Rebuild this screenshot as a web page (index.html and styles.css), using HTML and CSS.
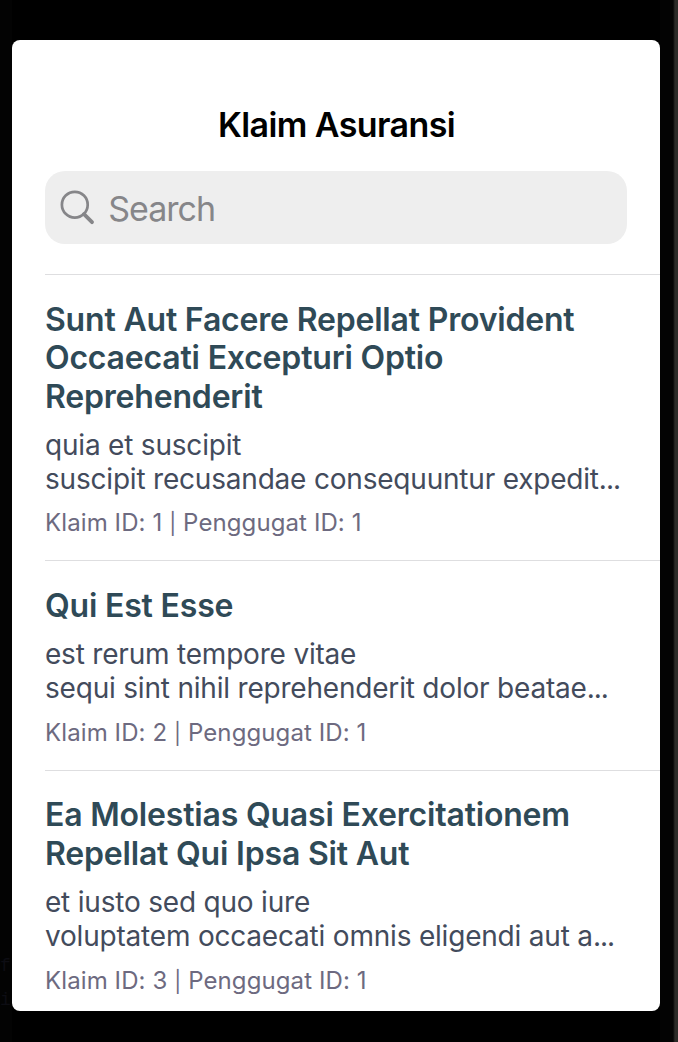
FILE: index.html
```html
<!DOCTYPE html>
<html lang="id">
<head>
<meta charset="utf-8">
<title>Klaim Asuransi</title>
<link rel="stylesheet" href="styles.css">
</head>
<body>
<div class="backdrop">
  <span class="ghost">f<br>i</span>
  <main class="screen">
    <h1 class="title">Klaim Asuransi</h1>
    <div class="search">
      <svg class="search-icon" width="36" height="36" viewBox="0 0 36 36" fill="none" stroke="#868689">
        <circle cx="15.8" cy="14.7" r="12.9" stroke-width="2.7"/>
        <path d="M25 24.2 33 32.2" stroke-width="3.8" stroke-linecap="round"/>
      </svg>
      <span class="placeholder">Search</span>
    </div>
    <section class="list">
      <article class="claim">
        <h2 class="claim-title">Sunt Aut Facere Repellat Provident<br>Occaecati Excepturi Optio<br>Reprehenderit</h2>
        <p class="claim-body">quia et suscipit<br>suscipit recusandae consequuntur expedit<span class="dots">...</span></p>
        <p class="claim-meta">Klaim ID: 1 <span class="bar">|</span> Penggugat ID: 1</p>
      </article>
      <article class="claim">
        <h2 class="claim-title">Qui Est Esse</h2>
        <p class="claim-body">est rerum tempore vitae<br>sequi sint nihil reprehenderit dolor beatae<span class="dots">...</span></p>
        <p class="claim-meta">Klaim ID: 2 <span class="bar">|</span> Penggugat ID: 1</p>
      </article>
      <article class="claim">
        <h2 class="claim-title">Ea Molestias Quasi Exercitationem<br>Repellat Qui Ipsa Sit Aut</h2>
        <p class="claim-body">et iusto sed quo iure<br>voluptatem occaecati omnis eligendi aut a<span class="dots">...</span></p>
        <p class="claim-meta">Klaim ID: 3 <span class="bar">|</span> Penggugat ID: 1</p>
      </article>
    </section>
  </main>
</div>
</body>
</html>
```
FILE: styles.css
```css
* { box-sizing: border-box; margin: 0; padding: 0; }
body { font-family: Inter, "Liberation Sans", sans-serif; background: #000; }
.backdrop {
  position: relative;
  width: 678px;
  height: 1042px;
  padding: 40px 0 0 12px;
  background: linear-gradient(90deg, #030303 12px, #000 12px, #000 660px, #030303 660px, #030303 673px, #2c2b28 675px);
  overflow: hidden;
}
.ghost {
  position: absolute;
  left: 0;
  top: 949px;
  font: 18px/34px "Liberation Mono", monospace;
  color: #0d0d13;
}
.screen {
  position: relative;
  width: 648px;
  height: 971px;
  padding-left: 33px;
  background: #fff;
  border-radius: 8px;
  overflow: hidden;
}
.title {
  width: 583px;
  padding-top: 65px;
  font-size: 34px;
  line-height: 40px;
  font-weight: 600;
  letter-spacing: -0.6px;
  text-align: center;
  color: #000;
  white-space: nowrap;
}
.search {
  display: flex;
  align-items: center;
  width: 582.4px;
  height: 73px;
  margin-top: 26px;
  padding-left: 14px;
  border-radius: 20px;
  background: #eee;
}
.search-icon { flex: none; }
.placeholder {
  margin-left: 13.3px;
  padding-top: 2px;
  font-size: 34px;
  line-height: 40px;
  letter-spacing: -1px;
  color: #868689;
}
.list { margin-top: 30px; }
.claim {
  border-top: 1px solid #dedee0;
  padding: 25.7px 0 21.8px;
  white-space: nowrap;
}
.claim-title {
  font-size: 32px;
  line-height: 38.4px;
  font-weight: 600;
  letter-spacing: -0.19px;
  color: #2f4a57;
}
.claim-body {
  margin-top: 12px;
  font-size: 28px;
  line-height: 34px;
  letter-spacing: -0.2px;
  color: #434b5c;
}
.dots { letter-spacing: -1px; }
.claim-meta {
  margin-top: 12.5px;
  font-size: 24px;
  line-height: 30px;
  letter-spacing: 0.1px;
  color: #6d6a80;
}
.bar { font-size: 21px; line-height: 1; }
```
